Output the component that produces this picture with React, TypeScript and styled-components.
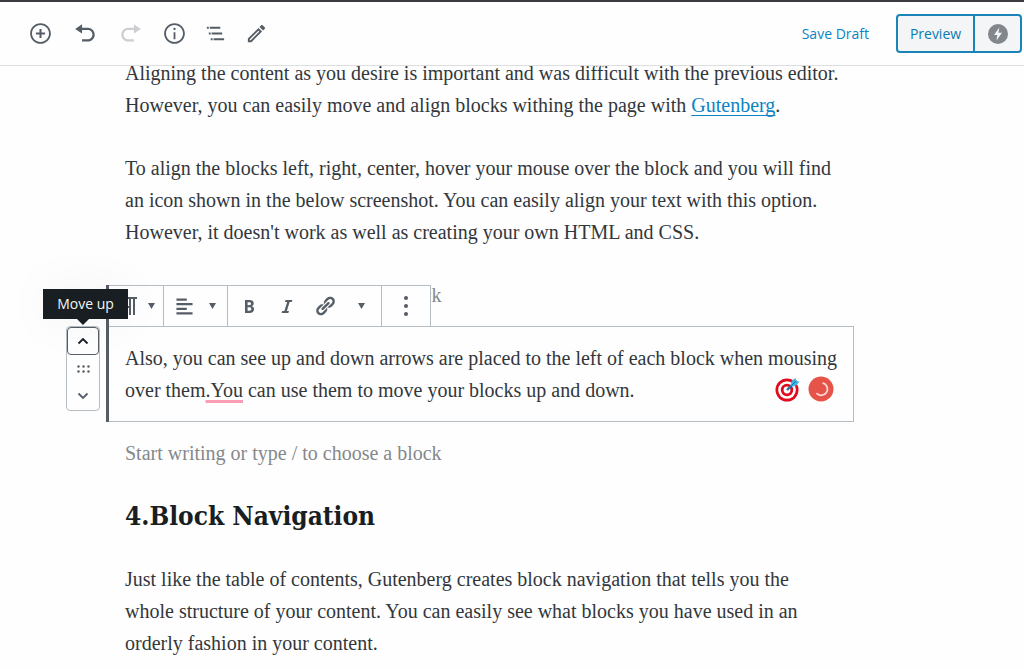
import React from "react";
import styled, { createGlobalStyle } from "styled-components";

const serif = `"Liberation Serif", "Times New Roman", serif`;
const headingSerif = `"DejaVu Serif Condensed", "DejaVu Serif", serif`;
const sans = `"Open Sans", "Noto Sans", sans-serif`;
const slate = "#555d66";
const line = "#b5bcc2";
const blue = "#0a84c6";

const GlobalStyle = createGlobalStyle`
  *, *::before, *::after { box-sizing: border-box; }
  body { margin: 0; background: #fefefe; color: #32373c; }
  button, input { font: inherit; color: inherit; margin: 0; }
`;

const Page = styled.div`
  height: 100vh;
  overflow: hidden;
`;

const Header = styled.header`
  position: relative;
  z-index: 5;
  display: flex;
  align-items: center;
  justify-content: space-between;
  height: 66px;
  padding: 0 2px 0 18px;
  background: #fefefe;
  border-top: 2px solid #3c3c40;
  border-bottom: 1px solid #dcdedf;
  font-family: ${sans};
  font-size: 14px;
`;

const Tools = styled.div`
  display: flex;
  align-items: center;
`;

const IconButton = styled.button<{ $width: number; $height?: number }>`
  display: flex;
  align-items: center;
  justify-content: center;
  flex: none;
  width: ${(p) => p.$width}px;
  height: ${(p) => p.$height ?? 40}px;
  padding: 0;
  border: 0;
  background: none;
  color: ${slate};

  &:disabled {
    color: #ccced1;
  }
`;

const Actions = styled.div`
  display: flex;
  align-items: center;
  gap: 27px;
`;

const SaveDraft = styled.button`
  padding: 0;
  border: 0;
  background: none;
  color: ${blue};
`;

const PreviewGroup = styled.div`
  display: flex;
  height: 39px;
  border: 2px solid #1a84b8;
  border-radius: 4px;
  background: #f3f5f6;
`;

const PreviewButton = styled.button<{ $width: number }>`
  display: flex;
  align-items: center;
  justify-content: center;
  width: ${(p) => p.$width}px;
  padding: 0;
  border: 0;
  background: none;
  color: #0b7cb3;

  & + & {
    border-left: 2px solid #1a84b8;
    color: #82878c;
  }
`;

const Editor = styled.main`
  display: flex;
  flex-direction: column;
  gap: 31px;
  margin-top: -9px;
  padding: 0 170px 0 106px;
  font-family: ${serif};
  font-size: 20px;
  line-height: 32px;
`;

const Paragraph = styled.p`
  margin: 0;
  padding-left: 19px;
  white-space: nowrap;
`;

const Heading = styled.h2`
  margin: 0;
  padding-left: 19px;
  color: #191e23;
  font-family: ${headingSerif};
  font-size: 26px;
  line-height: 32px;
`;

const TextLink = styled.a`
  color: ${blue};
  text-decoration: underline;
  text-decoration-color: ${blue};
  text-decoration-thickness: 1px;
  text-underline-offset: 3px;
  text-decoration-skip-ink: none;
`;

const Appender = styled.input`
  display: block;
  width: 100%;
  height: 32px;
  padding: 0 0 0 19px;
  border: 0;
  outline: 0;
  background: none;

  &::placeholder {
    color: #85888b;
    opacity: 1;
  }
`;

const SelectedBlock = styled.section`
  position: relative;
  margin: -16px 0;
  padding: 15px 0;
  border: 1px solid ${line};

  &::before {
    content: "";
    position: absolute;
    z-index: 2;
    top: -42px;
    bottom: -1px;
    left: -1px;
    width: 3px;
    background: ${slate};
  }
`;

const BlockText = styled(Paragraph)`
  padding-left: 18px;
`;

const Misspelling = styled.span`
  text-decoration: underline;
  text-decoration-color: #fb9db4;
  text-decoration-thickness: 3px;
  text-underline-offset: 3px;
  text-decoration-skip-ink: none;
`;

const BlockToolbar = styled.div`
  position: absolute;
  bottom: 100%;
  left: -1px;
  display: flex;
  height: 42px;
  background: #fefefe;
  border: 1px solid ${line};
`;

const ToolbarGroup = styled.div<{ $indent?: number; $end?: number }>`
  display: flex;
  align-items: center;
  padding-left: ${(p) => p.$indent ?? 0}px;
  padding-right: ${(p) => p.$end ?? 0}px;

  & + & {
    border-left: 1px solid ${line};
  }
`;

const Mover = styled.div`
  position: absolute;
  top: -1px;
  left: -41px;
  display: flex;
  flex-direction: column;
  width: 34px;
  height: 85px;
  border: 1px solid ${line};
  border-radius: 4px;
  background: #fefefe;
`;

const MoveUp = styled(IconButton)`
  border: 1px solid ${slate};
  border-radius: 4px;
  color: #191e23;
`;

const Tooltip = styled.div`
  position: absolute;
  z-index: 3;
  top: -38px;
  left: -64px;
  width: 85px;
  height: 30px;
  background: #191e23;
  box-shadow: 0 0 50px rgba(0, 0, 0, 0.05);
  color: #f4f5f5;
  font-family: ${sans};
  font-size: 14px;
  line-height: 30px;
  text-align: center;

  &::after {
    content: "";
    position: absolute;
    top: 100%;
    left: 34px;
    border: 6px solid transparent;
    border-top-color: #191e23;
    border-bottom: 0;
  }
`;

const Badges = styled.div`
  position: absolute;
  right: 19px;
  bottom: 19px;
  display: flex;
  align-items: center;
  gap: 8px;
`;

const Icon = ({ d, size = 23, box = 20 }: { d: string; size?: number; box?: number }) => (
  <svg width={size} height={size} viewBox={`0 0 ${box} ${box}`} fill="currentColor" aria-hidden="true">
    <path d={d} />
  </svg>
);

const Caret = () => (
  <svg width="7" height="6" viewBox="0 0 7 6" fill="currentColor" aria-hidden="true">
    <path d="M0 0h7L3.500 6z" />
  </svg>
);

const Chevron = ({ down }: { down?: boolean }) => (
  <svg width="12" height="8" viewBox="0 0 12 8" fill="none" stroke="currentColor" strokeWidth="1.800" aria-hidden="true">
    <path d={down ? "M1.500 1.500L6 6l4.500-4.500" : "M1.500 6.500L6 2l4.500 4.500"} />
  </svg>
);

const paths = {
  insert:
    "M10 1c-5 0-9 4-9 9s4 9 9 9 9-4 9-9-4-9-9-9zm0 16.400c-4.100 0-7.400-3.300-7.400-7.400S5.900 2.600 10 2.600s7.400 3.300 7.400 7.400-3.300 7.400-7.400 7.400zM10.900 6H9.100v3.100H6v1.800h3.100V14h1.800v-3.100H14V9.100h-3.100V6z",
  undo: "M12 5H7V2L1 6l6 4V7h5c2.200 0 4 1.800 4 4s-1.800 4-4 4H7v2h5c3.300 0 6-2.700 6-6s-2.700-6-6-6z",
  redo: "M8 5h5V2l6 4-6 4V7H8c-2.200 0-4 1.800-4 4s1.800 4 4 4h5v2H8c-3.300 0-6-2.700-6-6s2.700-6 6-6z",
  info: "M9.200 15h1.600V9H9.200v6zM10 5c-.6 0-1 .5-1 1s.4 1 1 1 1-.5 1-1-.4-1-1-1zm0-4c-5 0-9 4-9 9s4 9 9 9 9-4 9-9-4-9-9-9zm0 16.400c-4.100 0-7.400-3.300-7.400-7.400S5.900 2.600 10 2.600s7.400 3.300 7.400 7.400-3.300 7.400-7.400 7.400z",
  outline: "M5 5H3v2h2V5zm3 8h11v-2H8v2zm9-8H6v2h11V5zM7 11H5v2h2v-2zm0 8h2v-2H7v2zm3-2v2h11v-2H10z",
  pencil:
    "M14.060 9.020l.92.92L5.920 19H5v-.92l9.060-9.060M17.660 3c-.25 0-.51.1-.7.29l-1.830 1.830 3.750 3.750 1.830-1.830c.39-.39.39-1.020 0-1.410l-2.340-2.340c-.2-.2-.45-.29-.71-.29zm-3.600 3.190L3 17.250V21h3.750L17.810 9.940l-3.750-3.750z",
  paragraph:
    "M11 5v7H9.500C7.600 12 6 10.400 6 8.500S7.600 5 9.500 5H11m8-2H9.500C6.500 3 4 5.500 4 8.500S6.500 14 9.500 14H11v7h2V5h2v16h2V5h2V3z",
  align: "M12 5V3H3v2h9zm5 4V7H3v2h14zm-5 4v-2H3v2h9zm5 4v-2H3v2h14z",
  bold: "M6 4v13h4.540c1.370 0 2.460-.33 3.260-1 .8-.66 1.200-1.580 1.200-2.770 0-.84-.17-1.510-.51-2.010s-.9-.85-1.670-1.030v-.09c.57-.1 1.020-.4 1.360-.9s.51-1.130.51-1.910c0-1.140-.39-1.980-1.170-2.500C12.750 4.260 11.500 4 9.780 4H6zm2.570 5.150V6.260h1.360c.73 0 1.270.11 1.610.32.34.22.51.58.51 1.070 0 .54-.16.92-.47 1.150s-.82.35-1.510.35h-1.500zm0 2.190h1.600c1.440 0 2.160.53 2.160 1.610 0 .6-.17 1.050-.51 1.340s-.86.43-1.570.43H8.570v-3.380z",
  italic: "M14.780 6h-2.130l-2.800 9h2.120l-.62 2H4.600l.62-2h2.140l2.800-9H8.030l.62-2h6.750z",
  link: "M17.740 2.760c1.680 1.690 1.680 4.410 0 6.100l-1.530 1.520c-1.120 1.120-2.700 1.470-4.140 1.090l2.620-2.610.76-.77.76-.76c.84-.84.84-2.200 0-3.040-.84-.85-2.200-.85-3.040 0l-.77.76-3.380 3.380c-.37-1.440-.02-3.020 1.100-4.140l1.520-1.530c1.690-1.680 4.420-1.680 6.100 0zM8.590 13.430l5.340-5.340c.42-.42.42-1.100 0-1.520-.44-.43-1.130-.39-1.530 0l-5.330 5.340c-.42.42-.42 1.100 0 1.520.44.43 1.130.39 1.520 0zm-.76 2.290l4.140-4.150c.38 1.440.03 3.020-1.090 4.140l-1.520 1.530c-1.690 1.680-4.410 1.680-6.100 0-1.680-1.680-1.680-4.420 0-6.100l1.530-1.520c1.120-1.120 2.700-1.470 4.140-1.100l-4.140 4.150c-.85.84-.85 2.200 0 3.050.84.84 2.200.84 3.040 0z",
};

const Bolt = () => (
  <svg width="20" height="20" viewBox="0 0 20 20" aria-hidden="true">
    <circle cx="10" cy="10" r="10" fill="currentColor" />
    <path d="M11.300 3.500L6 11h3.300l-.8 5.500L14 8.700h-3.500z" fill="#f3f5f6" />
  </svg>
);

const Dots = () => (
  <svg width="6" height="20" viewBox="0 0 6 20" fill="currentColor" aria-hidden="true">
    <circle cx="3" cy="2" r="2" />
    <circle cx="3" cy="10" r="2" />
    <circle cx="3" cy="18" r="2" />
  </svg>
);

const DragDots = () => (
  <svg width="13" height="8" viewBox="0 0 13 8" fill="currentColor" aria-hidden="true">
    {[1.5, 6.5, 11.5].map((x) => (
      <React.Fragment key={x}>
        <circle cx={x} cy="1.500" r="1.200" />
        <circle cx={x} cy="6.500" r="1.200" />
      </React.Fragment>
    ))}
  </svg>
);

const Target = () => (
  <svg width="25" height="25" viewBox="0 0 25 25" aria-label="Target" role="img">
    <circle cx="12" cy="13" r="11.500" fill="#e00b1c" />
    <circle cx="12" cy="13" r="8.800" fill="#fff" />
    <circle cx="12" cy="13" r="6.200" fill="#e00b1c" />
    <circle cx="12" cy="13" r="3.400" fill="#fff" />
    <path d="M12 13l7-7" stroke="#1678ad" strokeWidth="2.400" />
    <path d="M16 8.500l.5-4.500L20.500 1l.7 3 3.300.6-3.600 4.200-3.600.6z" fill="#3fb0e4" />
    <path d="M16.500 8.500l5-5" stroke="#1678ad" strokeWidth="1" />
  </svg>
);

const Checker = () => (
  <svg width="26" height="26" viewBox="0 0 26 26" aria-label="Checking text" role="img">
    <circle cx="13" cy="13" r="12.500" fill="#e65348" />
    <path d="M15.200 7.200a6.200 6.200 0 1 1-6.200 10.400" fill="none" stroke="#fbd5d1" strokeWidth="1.800" strokeLinecap="round" />
  </svg>
);

export default function App() {
  return (
    <Page>
      <GlobalStyle />
      <Header>
        <Tools>
          <IconButton $width={45} aria-label="Add block"><Icon d={paths.insert} /></IconButton>
          <IconButton $width={45} aria-label="Undo"><Icon d={paths.undo} /></IconButton>
          <IconButton $width={45} aria-label="Redo" disabled><Icon d={paths.redo} /></IconButton>
          <IconButton $width={42} aria-label="Content structure"><Icon d={paths.info} /></IconButton>
          <IconButton $width={41} aria-label="Block navigation"><Icon d={paths.outline} box={24} /></IconButton>
          <IconButton $width={41} aria-label="Edit"><Icon d={paths.pencil} box={24} /></IconButton>
        </Tools>
        <Actions>
          <SaveDraft>Save Draft</SaveDraft>
          <PreviewGroup>
            <PreviewButton $width={75}>Preview</PreviewButton>
            <PreviewButton $width={47} aria-label="Preview AMP"><Bolt /></PreviewButton>
          </PreviewGroup>
        </Actions>
      </Header>

      <Editor>
        <Paragraph>
          Aligning the content as you desire is important and was difficult with the previous editor.
          <br />
          However, you can easily move and align blocks withing the page with <TextLink href="#gutenberg">Gutenberg</TextLink>.
        </Paragraph>
        <Paragraph>
          To align the blocks left, right, center, hover your mouse over the block and you will find
          <br />
          an icon shown in the below screenshot. You can easily align your text with this option.
          <br />
          However, it doesn't work as well as creating your own HTML and CSS.
        </Paragraph>
        <Appender aria-label="Add block before" placeholder="Start writing or type / to choose a block" />

        <SelectedBlock>
          <BlockToolbar>
            <ToolbarGroup $indent={9} $end={4}>
              <IconButton $width={27} aria-label="Change block type"><Icon d={paths.paragraph} box={24} size={24} /></IconButton>
              <IconButton $width={16} aria-label="Block types"><Caret /></IconButton>
            </ToolbarGroup>
            <ToolbarGroup $end={7}>
              <IconButton $width={40} aria-label="Align text"><Icon d={paths.align} /></IconButton>
              <IconButton $width={16} aria-label="Alignment options"><Caret /></IconButton>
            </ToolbarGroup>
            <ToolbarGroup $indent={2} $end={3}>
              <IconButton $width={38} aria-label="Bold"><Icon d={paths.bold} size={20} /></IconButton>
              <IconButton $width={38} aria-label="Italic"><Icon d={paths.italic} size={20} /></IconButton>
              <IconButton $width={38} aria-label="Link"><Icon d={paths.link} size={22} /></IconButton>
              <IconButton $width={34} aria-label="More text controls"><Caret /></IconButton>
            </ToolbarGroup>
            <ToolbarGroup>
              <IconButton $width={48} aria-label="More options"><Dots /></IconButton>
            </ToolbarGroup>
          </BlockToolbar>

          <Mover>
            <MoveUp $width={32} $height={28} aria-label="Move up"><Chevron /></MoveUp>
            <IconButton $width={32} $height={28} aria-label="Drag block"><DragDots /></IconButton>
            <IconButton $width={32} $height={26} aria-label="Move down"><Chevron down /></IconButton>
          </Mover>
          <Tooltip role="tooltip">Move up</Tooltip>

          <BlockText>
            Also, you can see up and down arrows are placed to the left of each block when mousing
            <br />
            over them<Misspelling>.You</Misspelling> can use them to move your blocks up and down.
          </BlockText>
          <Badges>
            <Target />
            <Checker />
          </Badges>
        </SelectedBlock>

        <Appender aria-label="Add block after" placeholder="Start writing or type / to choose a block" />
        <Heading>4.Block Navigation</Heading>
        <Paragraph>
          Just like the table of contents, Gutenberg creates block navigation that tells you the
          <br />
          whole structure of your content. You can easily see what blocks you have used in an
          <br />
          orderly fashion in your content.
        </Paragraph>
      </Editor>
    </Page>
  );
}
